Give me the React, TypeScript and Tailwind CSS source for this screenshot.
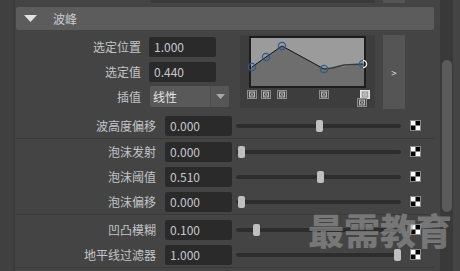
import type {ReactNode} from 'react';

const font = "font-['Noto_Sans_CJK_SC',sans-serif]";

const sliderRows = [
  {label: '波高度偏移', value: '0.000', pos: 80},
  null,
  {label: '泡沫发射', value: '0.000', pos: 2},
  {label: '泡沫阈值', value: '0.510', pos: 81},
  {label: '泡沫偏移', value: '0.000', pos: 2},
  null,
  {label: '凹凸模糊', value: '0.100', pos: 17},
  {label: '地平线过滤器', value: '1.000', pos: 158},
];

function Field({children}: {children: ReactNode}) {
  return (
    <div className="flex h-[20px] w-[67px] items-center rounded-[2px] bg-[#2a2a2a] pl-[5px] text-[12px] text-[#c6c8cc]">
      {children}
    </div>
  );
}

function Checker() {
  return (
    <svg width="11" height="11" viewBox="0 0 11 11">
      <rect x="0.5" y="0.5" width="10" height="10" fill="#fff" stroke="#8a8a8a" />
      <rect x="5.5" y="1" width="4.5" height="4.5" fill="#000" />
      <rect x="1" y="5.5" width="4.5" height="4.5" fill="#000" />
    </svg>
  );
}

function Marker({x, y, light}: {x: number; y: number; light?: boolean}) {
  return (
    <g transform={`translate(${x} ${y})`}>
      <rect
        x="0.5"
        y="0.5"
        width="9"
        height="8"
        fill={light ? '#cfcfcf' : '#454545'}
        stroke={light ? '#e4e4e4' : '#8c8c8c'}
      />
      <rect x="2.5" y="2" width="5" height="5" fill="none" stroke={light ? '#999' : '#b5b5b5'} />
      <path d="M2.5 2 L7.5 7 M7.5 2 L2.5 7" stroke={light ? '#999' : '#b5b5b5'} strokeWidth="0.9" />
    </g>
  );
}

function Graph() {
  const pts: [number, number][] = [
    [12, 32],
    [26, 22],
    [42, 11],
    [84, 34],
    [123, 29],
  ];
  return (
    <svg width="135" height="73" viewBox="0 0 135 73" className="shrink-0">
      <rect x="0" y="0" width="135" height="73" fill="#3d3d3d" />
      <rect x="10" y="2" width="115" height="50" fill="#9b9b9b" />
      <polygon
        points="11,32 12,32 26,22 42,11 84,34 92,33 123,29 125,29 125,52 11,52"
        fill="#6e6e6e"
      />
      <polyline points="12,32 26,22 42,11 84,34" fill="none" stroke="#111" strokeWidth="1" />
      <polyline points="84,34 92,33 104,30 123,29" fill="none" stroke="#3a3a3a" strokeWidth="1.4" />
      <rect x="10" y="2" width="115" height="50" fill="none" stroke="#1d1d1d" strokeWidth="2" />
      {pts.map(([x, y], i) => (
        <circle key={i} cx={x} cy={y} r="3.6" fill="none" stroke="#2c5b8c" strokeWidth="1.3" />
      ))}
      <path d="M123 25.4 A3.6 3.6 0 0 1 123 32.6" fill="none" stroke="#f2f2f2" strokeWidth="1.3" />
      <Marker x={7} y={55} />
      <Marker x={21} y={55} />
      <Marker x={37} y={55} />
      <Marker x={79} y={55} />
      <Marker x={120} y={55} light />
      <Marker x={117} y={63} />
    </svg>
  );
}

export default function App() {
  return (
    <div className={`relative flex h-[271px] w-[460px] overflow-hidden bg-[#444444] ${font}`}>
      <div className="w-[15px] shrink-0 border-r-2 border-[#3a3a3a] bg-[#404040]" />

      <div className="flex w-[425px] shrink-0 flex-col">
        {/* previous section's tail */}
        <div className="flex h-[3px]">
          <div className="ml-[136px] w-[224px] bg-[#3b3b3b]" />
          <div className="ml-[8px] w-[22px] bg-[#555555]" />
        </div>

        {/* header */}
        <div className="mt-[4px] ml-px mr-[6px] flex h-[23px] items-center rounded-[2px] bg-[#5c5c5c]">
          <svg width="13" height="7" viewBox="0 0 13 7" className="ml-[8px]">
            <path d="M0 0 H13 L6.5 7 Z" fill="#e2e2e2" />
          </svg>
          <span className="ml-[16px] text-[12px] text-[#c8cad0]">波峰</span>
        </div>

        {/* curve section */}
        <div className="mt-[5px] flex h-[74px]">
          <div className="flex w-[225px] shrink-0 flex-col pt-[2px]">
            <div className="flex items-center">
              <span className="w-[126px] text-right text-[12px] text-[#c2c4c8]">选定位置</span>
              <div className="ml-[8px]">
                <Field>1.000</Field>
              </div>
            </div>
            <div className="mt-[5px] flex items-center">
              <span className="w-[126px] text-right text-[12px] text-[#c2c4c8]">选定值</span>
              <div className="ml-[8px]">
                <Field>0.440</Field>
              </div>
            </div>
            <div className="mt-[4px] flex items-center">
              <span className="w-[126px] text-right text-[12px] text-[#c2c4c8]">插值</span>
              <div className="ml-[9px] flex h-[21px] w-[79px] overflow-hidden rounded-[2px] bg-[#595959]">
                <span className="flex flex-1 items-center pl-[3px] text-[12px] text-[#e6e6e6]">线性</span>
                <div className="flex w-[19px] items-center justify-center border-l border-[#4c4c4c] bg-[#565656]">
                  <svg width="9" height="5" viewBox="0 0 9 5">
                    <path d="M0 0 H9 L4.5 5 Z" fill="#a8a8a8" />
                  </svg>
                </div>
              </div>
            </div>
          </div>
          <Graph />
          <div className="ml-[8px] flex h-[74px] w-[22px] items-center justify-center bg-[#555555] text-[10px] text-[#d8dcf0]">
            &gt;
          </div>
        </div>

        {/* slider rows */}
        <div className="mt-[4px] flex flex-col">
          {sliderRows.map((row, i) =>
            row ? (
              <div key={i} className="flex h-[25px] shrink-0 items-center">
                <span className="w-[141px] text-right text-[12px] text-[#c2c4c8]">{row.label}</span>
                <div className="ml-[9px]">
                  <Field>{row.value}</Field>
                </div>
                <div className="relative ml-[4px] flex h-[14px] w-[165px] items-center">
                  <div className="h-[4px] w-full rounded-full bg-[#2d2d2d]" />
                  <div
                    className="absolute top-px h-[12px] w-[7px] rounded-[2px] bg-[#bfbfbf]"
                    style={{left: row.pos}}
                  />
                </div>
                <div className="ml-[9px] flex">
                  <Checker />
                </div>
              </div>
            ) : (
              <div
                key={i}
                className={`ml-px mr-[6px] h-px shrink-0 bg-[#3a3a3a] ${i === 5 ? 'mb-[2px]' : ''}`}
              />
            ),
          )}
          <div className="mr-[6px] h-px bg-[#3a3a3a]" />
        </div>
      </div>

      {/* scrollbar */}
      <div className="flex w-[13px] shrink-0 justify-center bg-[#393939]">
        <div className="mt-[60px] h-[152px] w-[10px] rounded-full bg-[#5b5b5b]" />
      </div>
      <div className="w-[5px] shrink-0" />

      {/* watermark */}
      <div className="pointer-events-none absolute left-[308px] top-[207px] whitespace-nowrap text-[36px] font-black leading-[44px] text-[#9a9a9a]/60">
        最需教育
      </div>
    </div>
  );
}
